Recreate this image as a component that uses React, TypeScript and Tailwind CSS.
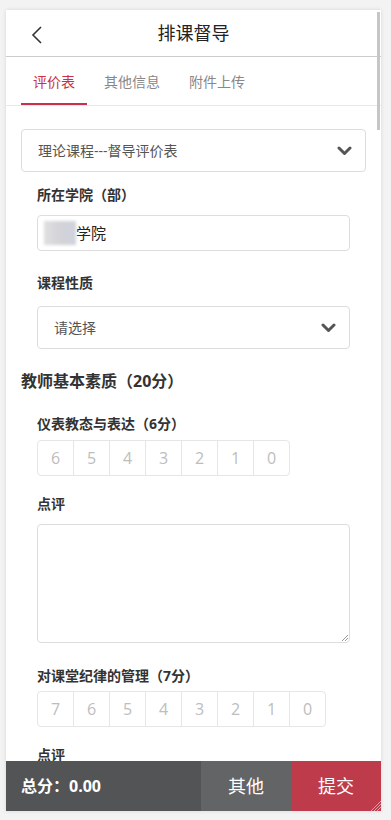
import React from "react";

const font = { fontFamily: '"Open Sans", "Noto Sans CJK SC", sans-serif' };

function Chevron() {
  return (
    <svg width="15" height="10" viewBox="0 0 15 10" className="shrink-0">
      <polyline points="2,2 7.5,7.5 13,2" fill="none" stroke="#555" strokeWidth="3" strokeLinecap="round" strokeLinejoin="round" />
    </svg>
  );
}

function Rating({ max }: { max: number }) {
  const nums = Array.from({ length: max + 1 }, (_, i) => max - i);
  return (
    <div className="mt-[6px] flex h-[36px] w-fit overflow-hidden rounded-[4px] border border-[#e6e6e6]">
      {nums.map((n, i) => (
        <div
          key={n}
          className={`flex items-center justify-center text-[16px] text-[#bdbdbd] ${i > 0 ? "w-[36px] border-l border-[#e6e6e6]" : "w-[35px]"}`}
        >
          {n}
        </div>
      ))}
    </div>
  );
}

function Label({ children, mt }: { children: React.ReactNode; mt: string }) {
  return <div className={`${mt} h-[20px] text-[14px] font-bold leading-[20px] text-[#333]`}>{children}</div>;
}

export default function App() {
  return (
    <div className="h-[820px] bg-[#f3f3f3] pt-[10px]" style={font}>
      <div className="relative ml-[6px] flex h-[801px] w-[375px] flex-col overflow-hidden bg-white shadow-[0_0_4px_rgba(0,0,0,0.12)]">
        {/* header */}
        <div className="relative flex h-[47px] shrink-0 items-center justify-center border-b border-[#cccccc]">
          <svg width="12" height="18" viewBox="0 0 12 18" className="absolute left-[25px] top-[16px]">
            <polyline points="10,1 2,9 10,17" fill="none" stroke="#333" strokeWidth="1.6" />
          </svg>
          <span className="text-[18px] text-[#222]">排课督导</span>
        </div>

        {/* tabs */}
        <div className="flex h-[49px] shrink-0 gap-[5px] border-b border-[#e8e8e8] pl-[15px]">
          <div className="flex items-center border-b-2 border-[#c9314a] px-3 pt-[2px] text-[14px] text-[#c9314a]">评价表</div>
          <div className="flex items-center px-3 text-[14px] text-[#888]">其他信息</div>
          <div className="flex items-center px-3 text-[14px] text-[#888]">附件上传</div>
        </div>

        {/* content */}
        <div className="flex-1 overflow-hidden px-[15px]">
          <div className="mt-[23px] flex h-[43px] items-center justify-between rounded-[4px] border border-[#dddddd] pl-[16px] pr-[13px] text-[14px] text-[#555]">
            <span>理论课程---督导评价表</span>
            <Chevron />
          </div>

          <div className="px-4">
            <Label mt="mt-[13px]">所在学院（部）</Label>
            <div className="mt-[10px] flex h-[36px] items-center rounded-[4px] border border-[#dddddd] pl-[6px]">
              <div className="h-[24px] w-[32px] bg-gradient-to-r from-[#e0e0e0] via-[#d3d3d8] to-[#cfd3dc] blur-[1.5px]" />
              <span className="text-[15px] text-[#222]">学院</span>
            </div>

            <Label mt="mt-[22px]">课程性质</Label>
            <div className="mt-[13px] flex h-[43px] items-center justify-between rounded-[4px] border border-[#dddddd] pl-[16px] pr-[13px] text-[14px] text-[#555]">
              <span>请选择</span>
              <Chevron />
            </div>
          </div>

          <div className="mt-[21px] h-[22px] text-[16px] font-bold leading-[22px] text-[#333]">教师基本素质（20分）</div>

          <div className="px-4">
            <Label mt="mt-[22px]">仪表教态与表达（6分）</Label>
            <Rating max={6} />

            <Label mt="mt-[18px]">点评</Label>
            <div className="relative mt-[10px] h-[119px] rounded-[4px] border border-[#dddddd]">
              <svg width="7" height="7" viewBox="0 0 7 7" className="absolute bottom-[1px] right-[1px]">
                <line x1="1" y1="7" x2="7" y2="1" stroke="#999" strokeWidth="1" />
                <line x1="4" y1="7" x2="7" y2="4" stroke="#999" strokeWidth="1" />
              </svg>
            </div>

            <Label mt="mt-[23px]">对课堂纪律的管理（7分）</Label>
            <div className="-mt-[1px]">
              <Rating max={7} />
            </div>

            <Label mt="mt-[18px]">点评</Label>
          </div>
        </div>

        {/* footer */}
        <div className="absolute bottom-0 left-0 flex h-[50px] w-full text-white">
          <div className="flex w-[195px] items-center bg-[#535456] pl-[15px] text-[16px] font-bold">总分：0.00</div>
          <div className="flex w-[90px] items-center justify-center bg-[#636466] text-[18px]">其他</div>
          <div className="relative flex w-[90px] items-center justify-center bg-[#bd3b4b] text-[18px]">
            提交
            <svg width="12" height="12" viewBox="0 0 12 12" className="absolute bottom-0 right-0">
              <line x1="2" y1="12" x2="12" y2="2" stroke="#d9a0a8" strokeWidth="1" />
              <line x1="5" y1="12" x2="12" y2="5" stroke="#d9a0a8" strokeWidth="1" />
              <line x1="8" y1="12" x2="12" y2="8" stroke="#d9a0a8" strokeWidth="1" />
            </svg>
          </div>
        </div>

        {/* scrollbar thumb */}
        <div className="absolute right-[1px] top-[2px] h-[118px] w-[3px] bg-[#c6c6c6]" />
      </div>
    </div>
  );
}
